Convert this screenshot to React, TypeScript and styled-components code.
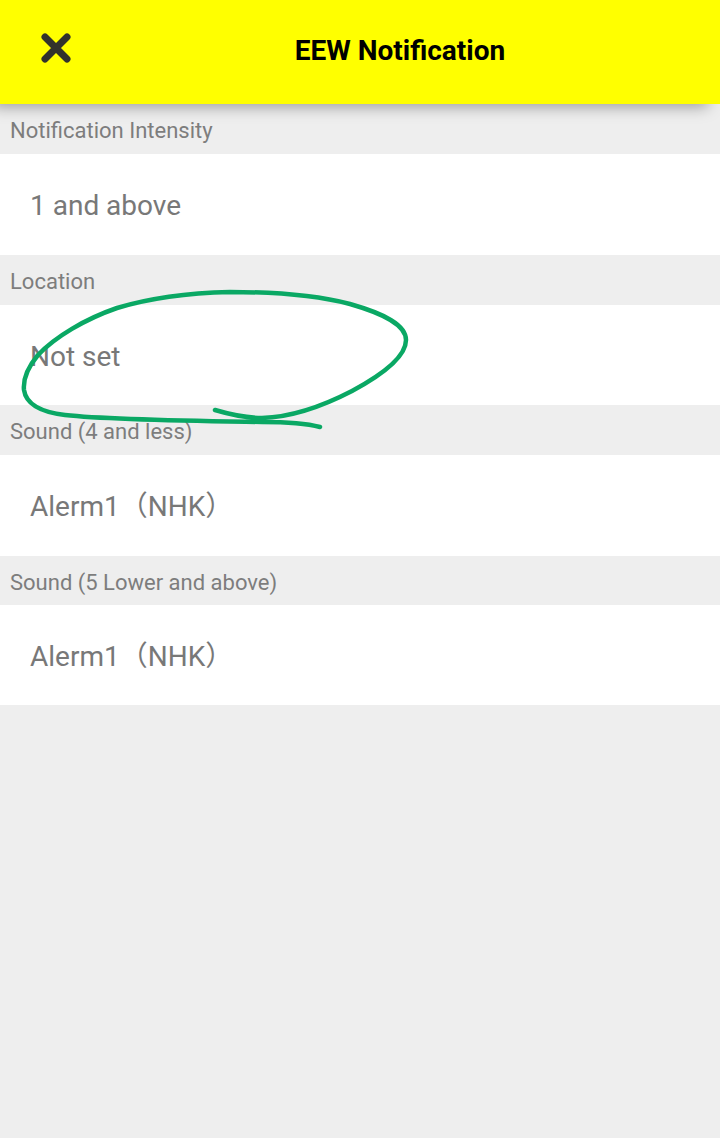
import React from "react";
import styled, { createGlobalStyle } from "styled-components";

const Global = createGlobalStyle`
  html, body { margin: 0; padding: 0; background: #eeeeee; }
  * { box-sizing: border-box; }
`;

const Page = styled.div`
  position: relative;
  width: 720px;
  height: 1138px;
  overflow: hidden;
  background: #eeeeee;
  font-family: Roboto, "Noto Sans CJK JP", sans-serif;
`;

const Header = styled.header`
  position: relative;
  z-index: 1;
  display: flex;
  align-items: center;
  height: 104px;
  padding-bottom: 8px;
  background: #ffff00;
  box-shadow: -10px 5px 14px -2px rgba(0, 0, 0, 0.34);
`;

const CloseButton = styled.div`
  display: flex;
  align-items: center;
  flex: 0 0 80px;
  padding-left: 41px;
`;

const Title = styled.h1`
  flex: 1;
  margin: 0;
  padding-top: 6px;
  text-align: center;
  color: #000;
  font-size: 28px;
  font-weight: 700;
  line-height: 32px;
`;

const SectionLabel = styled.div<{ $height: number }>`
  height: ${(p) => p.$height}px;
  padding: 14px 10px 0;
  color: #7d7d7d;
  font-size: 22px;
  line-height: 26px;
`;

const Row = styled.div<{ $height: number }>`
  height: ${(p) => p.$height}px;
  padding: 36px 0 0 30px;
  background: #fff;
  color: #787878;
  font-size: 28px;
  line-height: 32px;
`;

const Scribble = styled.svg`
  position: absolute;
  left: 0;
  top: 0;
  z-index: 2;
  pointer-events: none;
`;

const sections = [
  { label: "Notification Intensity", labelHeight: 50, value: "1 and above", height: 101 },
  { label: "Location", labelHeight: 50, value: "Not set", height: 100 },
  { label: "Sound (4 and less)", labelHeight: 50, value: "Alerm1（NHK）", height: 101 },
  { label: "Sound (5 Lower and above)", labelHeight: 49, value: "Alerm1（NHK）", height: 100 },
];

export default function App() {
  return (
    <Page>
      <Global />
      <Header>
        <CloseButton>
          <svg width="30" height="30" viewBox="0 0 30 30">
            <path d="M4 4 L26 26 M26 4 L4 26" stroke="#32322c" strokeWidth="7" strokeLinecap="round" fill="none" />
          </svg>
        </CloseButton>
        <Title>EEW Notification</Title>
      </Header>
      {sections.map((s) => (
        <React.Fragment key={s.label}>
          <SectionLabel $height={s.labelHeight}>{s.label}</SectionLabel>
          <Row $height={s.height}>{s.value}</Row>
        </React.Fragment>
      ))}
      <Scribble width="720" height="1138" viewBox="0 0 720 1138">
        <path
          d="M215 410 C232 415 245 418 262 418 C295 417 325 405 352 391 C378 377 406 358 406 340 C406 325 385 314 350 304 C315 295 275 292 230 292 C190 293 150 298 117 308 C85 319 55 337 38 355 C28 367 23 380 24 390 C26 404 40 412 65 415 C110 420 200 421 262 422 C285 422 305 423 320 427"
          stroke="#0aa864"
          strokeWidth="4.5"
          strokeLinecap="round"
          strokeLinejoin="round"
          fill="none"
        />
      </Scribble>
    </Page>
  );
}
